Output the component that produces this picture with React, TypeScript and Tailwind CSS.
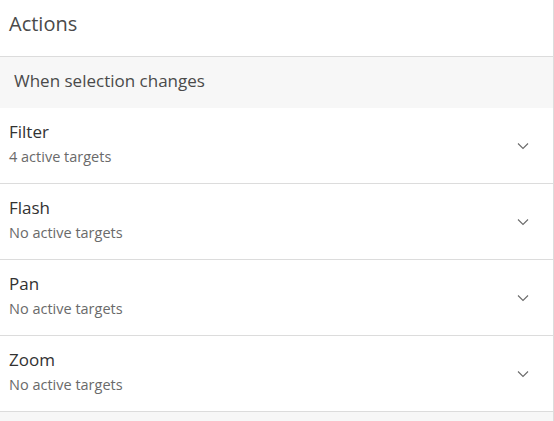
const actions = [
  { name: "Filter", status: "4 active targets" },
  { name: "Flash", status: "No active targets" },
  { name: "Pan", status: "No active targets" },
  { name: "Zoom", status: "No active targets" },
];

function Chevron() {
  return (
    <svg width="12" height="8" viewBox="0 0 12 8" fill="none" className="text-[#6a6a6a]">
      <path d="M1 1.5l5 5 5-5" stroke="currentColor" strokeWidth="1.1" />
    </svg>
  );
}

export default function App() {
  return (
    <div
      className="w-[554px] h-[421px] bg-[#f7f7f7] border-r border-[#dcdcdc] overflow-hidden"
      style={{ fontFamily: "'Open Sans', 'Noto Sans', sans-serif" }}
    >
      <div className="h-[57px] bg-white border-b border-[#dcdcdc] px-[9px] pt-[10px]">
        <h1 className="text-[20px] leading-[28px] text-[#4a4a4a]">Actions</h1>
      </div>

      <div className="h-[51px] px-[14px] pt-[12px]">
        <span className="text-[17px] leading-[24px] text-[#4a4a4a]">When selection changes</span>
      </div>

      <div className="flex flex-col">
        {actions.map((a) => (
          <div
            key={a.name}
            className="h-[76px] bg-white border-b border-[#dcdcdc] pl-[9px] pr-[24px] flex items-center justify-between"
          >
            <div className="self-stretch flex flex-col pt-[12px]">
              <span className="text-[17px] leading-[24px] text-[#323232]">{a.name}</span>
              <span className="mt-[3px] text-[14.5px] leading-[20px] text-[#6a6a6a]">{a.status}</span>
            </div>
            <Chevron />
          </div>
        ))}
      </div>
    </div>
  );
}
